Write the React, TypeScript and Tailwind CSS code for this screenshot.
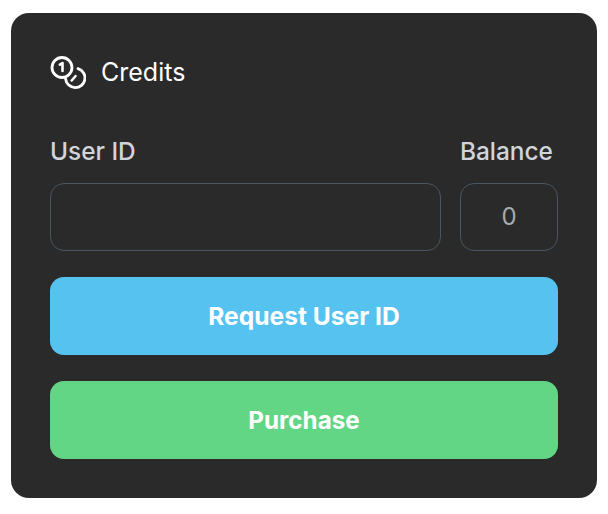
import React from "react";

const CoinsIcon: React.FC = () => (
  <svg width="36" height="36" viewBox="0 0 36 36" fill="none" stroke="white" strokeWidth="2.8" strokeLinecap="round" strokeLinejoin="round">
    <circle cx="12" cy="12.5" r="10" />
    <path d="M9.8 9.6 L12.5 8 V16" strokeWidth="2.6" />
    <path d="M28 13.6 A9.7 9.7 0 1 1 15.6 24" />
    <path d="M21.6 25.6 L25.6 21" strokeWidth="2.4" />
  </svg>
);

export default function App() {
  return (
    <div className="h-[514px] w-[608px] bg-white pt-[13px] pl-[11px] font-['Inter',sans-serif]">
      <div className="flex h-[485px] w-[586px] flex-col rounded-[18px] bg-[#2a2a2a] px-[39px] pt-[41px]">
        <div className="flex h-[38px] items-center gap-[15px]">
          <CoinsIcon />
          <span className="text-[25px] text-white">Credits</span>
        </div>

        <div className="mt-[44px] flex gap-[19px]">
          <div className="flex flex-1 flex-col">
            <label className="mb-[17px] text-[24.4px] leading-[30px] font-medium text-[#d1d5db]">User ID</label>
            <input className="h-[68px] w-full rounded-[14px] border border-[#4b5563] bg-transparent" />
          </div>
          <div className="flex w-[98px] flex-col items-start">
            <label className="mb-[17px] text-[24.4px] leading-[30px] font-medium whitespace-nowrap text-[#d1d5db]">Balance</label>
            <div className="flex h-[68px] w-full items-center justify-center rounded-[14px] border border-[#4b5563] text-[24px] text-[#a8abb1]">
              0
            </div>
          </div>
        </div>

        <button className="mt-[26px] h-[78px] rounded-[14px] bg-[#56c2f0] text-[24.6px] font-bold text-white">
          Request User ID
        </button>
        <button className="mt-[26px] h-[78px] rounded-[14px] bg-[#63d685] pt-[2px] text-[24.2px] font-bold text-white">
          Purchase
        </button>
      </div>
    </div>
  );
}
